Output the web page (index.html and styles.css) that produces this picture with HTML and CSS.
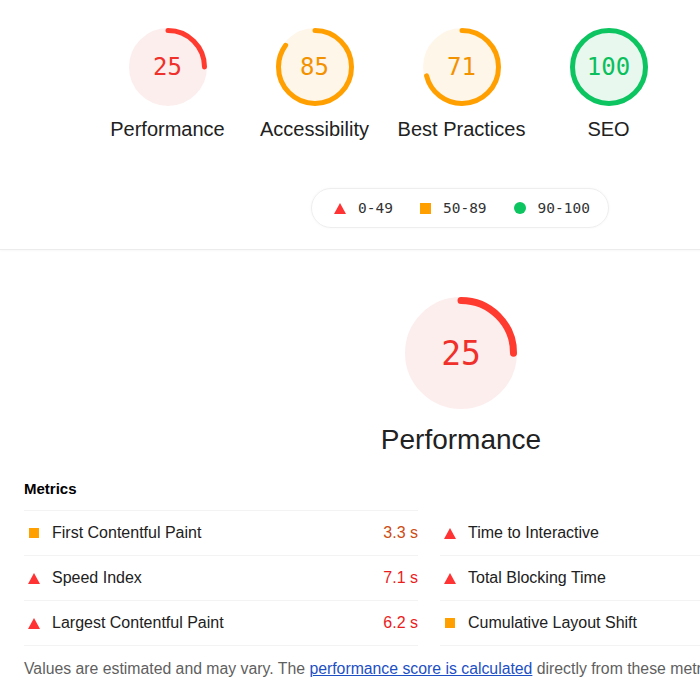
FILE: index.html
```html
<!DOCTYPE html>
<html lang="en">
<head>
<meta charset="utf-8">
<title>Lighthouse Report</title>
<link rel="stylesheet" href="styles.css">
</head>
<body>
<div class="page">
  <header class="scores-header">
    <div class="gauges">
      <div class="gauge gauge--fail">
        <div class="ring">
          <svg class="ring-svg" width="78" height="78" viewBox="0 0 78 78">
            <circle class="ring-base" cx="39" cy="39" r="36.5"/>
            <circle class="ring-arc" cx="39" cy="39" r="36.5" stroke-dasharray="57.3 229.3" transform="rotate(-90 39 39)"/>
          </svg>
          <span class="score">25</span>
        </div>
        <div class="gauge-label">Performance</div>
      </div>
      <div class="gauge gauge--average">
        <div class="ring">
          <svg class="ring-svg" width="78" height="78" viewBox="0 0 78 78">
            <circle class="ring-base" cx="39" cy="39" r="36.5"/>
            <circle class="ring-arc" cx="39" cy="39" r="36.5" stroke-dasharray="194.9 229.3" transform="rotate(-90 39 39)"/>
          </svg>
          <span class="score">85</span>
        </div>
        <div class="gauge-label">Accessibility</div>
      </div>
      <div class="gauge gauge--average">
        <div class="ring">
          <svg class="ring-svg" width="78" height="78" viewBox="0 0 78 78">
            <circle class="ring-base" cx="39" cy="39" r="36.5"/>
            <circle class="ring-arc" cx="39" cy="39" r="36.5" stroke-dasharray="162.8 229.3" transform="rotate(-90 39 39)"/>
          </svg>
          <span class="score">71</span>
        </div>
        <div class="gauge-label">Best Practices</div>
      </div>
      <div class="gauge gauge--pass">
        <div class="ring">
          <svg class="ring-svg" width="78" height="78" viewBox="0 0 78 78">
            <circle class="ring-base" cx="39" cy="39" r="36.5"/>
            <circle class="ring-arc" cx="39" cy="39" r="36.5" stroke-dasharray="229.4 229.4" transform="rotate(-90 39 39)"/>
          </svg>
          <span class="score">100</span>
        </div>
        <div class="gauge-label">SEO</div>
      </div>
    </div>
    <div class="legend-row">
      <div class="legend">
        <span class="legend-item"><span class="ico ico-tri"></span>0-49</span>
        <span class="legend-item"><span class="ico ico-sq"></span>50-89</span>
        <span class="legend-item"><span class="ico ico-dot"></span>90-100</span>
      </div>
    </div>
  </header>

  <section class="category">
    <div class="big-gauge gauge--fail">
      <div class="ring">
        <svg class="ring-svg" width="112" height="112" viewBox="0 0 112 112">
          <circle class="ring-base big-base" cx="56" cy="56" r="52.5"/>
          <circle class="ring-arc big-arc" cx="56" cy="56" r="52.5" stroke-dasharray="82.5 329.9" transform="rotate(-90 56 56)"/>
        </svg>
        <span class="score big-score">25</span>
      </div>
      <div class="big-label">Performance</div>
    </div>

    <div class="metrics">
      <h2 class="metrics-title">Metrics</h2>
      <div class="metric-grid">
        <div class="metric">
          <span class="m-icon"><span class="ico ico-sq ico-sm"></span></span>
          <span class="m-name">First Contentful Paint</span>
          <span class="m-value v-average">3.3 s</span>
        </div>
        <div class="metric">
          <span class="m-icon"><span class="ico ico-tri"></span></span>
          <span class="m-name">Time to Interactive</span>
        </div>
        <div class="metric">
          <span class="m-icon"><span class="ico ico-tri"></span></span>
          <span class="m-name">Speed Index</span>
          <span class="m-value v-fail">7.1 s</span>
        </div>
        <div class="metric">
          <span class="m-icon"><span class="ico ico-tri"></span></span>
          <span class="m-name">Total Blocking Time</span>
        </div>
        <div class="metric">
          <span class="m-icon"><span class="ico ico-tri"></span></span>
          <span class="m-name">Largest Contentful Paint</span>
          <span class="m-value v-fail">6.2 s</span>
        </div>
        <div class="metric">
          <span class="m-icon"><span class="ico ico-sq ico-sm"></span></span>
          <span class="m-name">Cumulative Layout Shift</span>
        </div>
      </div>
      <p class="note">Values are estimated and may vary. The <a href="#">performance score is calculated</a> directly from these metrics. See calculator.</p>
    </div>
  </section>
</div>
</body>
</html>
```

FILE: styles.css
```css
html, body {
  margin: 0;
  padding: 0;
  overflow: hidden;
  background: #ffffff;
}

body {
  font-family: "Liberation Sans", Arial, sans-serif;
  color: #212121;
}

.page {
  width: 920px;
}

/* ---------- header with gauges ---------- */
.scores-header {
  padding-top: 28px;
  padding-bottom: 21px;
  border-bottom: 1px solid #ececec;
  box-shadow: 0 1px 2px rgba(0, 0, 0, 0.03);
}

.gauges {
  display: flex;
  padding-left: 94px;
}

.gauge {
  width: 147px;
  display: flex;
  flex-direction: column;
  align-items: center;
}

.ring {
  display: grid;
  place-items: center;
}

.ring > * {
  grid-area: 1 / 1;
}

.ring-svg {
  display: block;
}

.ring-base {
  stroke-width: 5;
}

.ring-arc {
  fill: none;
  stroke-width: 5;
  stroke-linecap: round;
}

.score {
  font-family: "DejaVu Sans Mono", monospace;
  font-size: 24px;
  line-height: 1;
}

.gauge--fail .ring-base { fill: #fdeeee; stroke: #fdeeee; }
.gauge--fail .ring-arc { stroke: #ff3b30; }
.gauge--fail .score { color: #f0302a; }

.gauge--average .ring-base { fill: #fff6ea; stroke: #fff6ea; }
.gauge--average .ring-arc { stroke: #ffa000; }
.gauge--average .score { color: #f39200; }

.gauge--pass .ring-base { fill: #e8f8ef; stroke: #e8f8ef; }
.gauge--pass .ring-arc { stroke: #0cc460; }
.gauge--pass .score { color: #0bbf5c; }

.gauge-label {
  margin-top: 11px;
  font-size: 20px;
  line-height: 24px;
  color: #212121;
  white-space: nowrap;
}

/* ---------- legend ---------- */
.legend-row {
  display: flex;
  justify-content: center;
  margin-top: 47px;
}

.legend {
  display: flex;
  align-items: center;
  height: 38px;
  padding: 0 18px 0 22px;
  border: 1px solid #eeeeee;
  border-radius: 20px;
  box-shadow: 0 0 3px rgba(0, 0, 0, 0.04);
  font-family: "DejaVu Sans Mono", monospace;
  font-size: 14.5px;
  color: #333333;
}

.legend-item {
  display: flex;
  align-items: center;
  gap: 12px;
}

.legend-item + .legend-item {
  margin-left: 27px;
}

.ico {
  display: inline-block;
  flex: none;
}

.ico-tri {
  width: 0;
  height: 0;
  border-left: 6px solid transparent;
  border-right: 6px solid transparent;
  border-bottom: 11px solid #ff3333;
}

.ico-sq {
  width: 11px;
  height: 11px;
  background: #ffa000;
}

.ico-sm {
  width: 10px;
  height: 10px;
}

.ico-dot {
  width: 12px;
  height: 12px;
  border-radius: 50%;
  background: #0cc460;
}

/* ---------- category ---------- */
.category {
  padding-top: 47px;
}

.big-gauge {
  display: flex;
  flex-direction: column;
  align-items: center;
  margin-left: 2px;
}

.big-base { stroke-width: 7; }
.big-arc { stroke-width: 7; }

.big-score {
  font-size: 33px;
}

.big-label {
  margin-top: 15px;
  font-size: 28px;
  line-height: 32px;
  color: #212121;
}

.metrics {
  padding: 0 24px;
}

.metrics-title {
  margin: 24px 0 0;
  padding-bottom: 12px;
  font-size: 15px;
  line-height: 18px;
  font-weight: bold;
  color: #000000;
  border-bottom: 1px solid #f3f3f3;
  width: 394px;
}

.metric-grid {
  display: grid;
  grid-template-columns: 394px 394px;
  column-gap: 22px;
}

.metric {
  display: flex;
  align-items: center;
  height: 44px;
  border-bottom: 1px solid #f3f3f3;
  font-size: 16px;
}

.m-icon {
  width: 20px;
  margin-right: 8px;
  display: flex;
  justify-content: center;
  align-items: center;
}

.m-name {
  color: #212121;
  white-space: nowrap;
}

.m-value {
  margin-left: auto;
  white-space: nowrap;
}

.v-average { color: #cc4d14; }
.v-fail { color: #eb1c1c; }

.note {
  margin: 13px 0 0;
  font-size: 15.8px;
  line-height: 20px;
  color: #5f5f5f;
  white-space: nowrap;
}

.note a {
  color: #1d4fc4;
  text-decoration: underline;
}
```
